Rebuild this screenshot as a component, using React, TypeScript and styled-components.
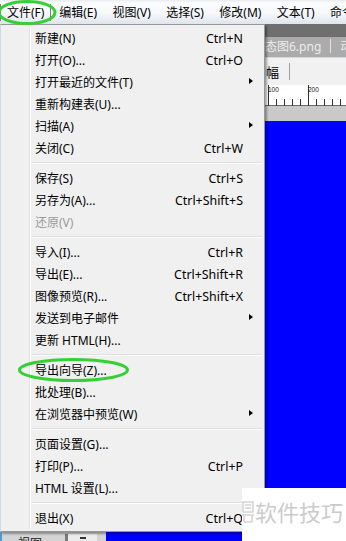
import React from "react";
import styled, { createGlobalStyle } from "styled-components";

const Global = createGlobalStyle`
  html, body { margin: 0; padding: 0; overflow: hidden; background: #fff; }
  body { width: 346px; height: 541px; }
  * { box-sizing: border-box; }
`;

const FONT = `"Noto Sans", "Noto Sans CJK SC", sans-serif`;

const Window = styled.div`
  position: relative;
  width: 346px;
  height: 560px;
  display: flex;
  flex-direction: column;
  font-family: ${FONT};
  font-size: 12px;
  color: #000;
  overflow: hidden;
`;

const MenuBar = styled.div`
  height: 24px;
  display: flex;
  align-items: stretch;
  background: linear-gradient(#e9ecf0 0px, #fbfcfd 3px, #f6f8fb 55%, #dfe5ee 100%);
  white-space: nowrap;
`;

const BarItem = styled.div<{ $active?: boolean }>`
  display: flex;
  align-items: center;
  padding: 0 ${(p) => (p.$active ? "6px" : "6.7px")} 1px;
  border-left: 1px solid ${(p) => (p.$active ? "#7d7d7d" : "transparent")};
  border-right: 1px solid ${(p) => (p.$active ? "#7d7d7d" : "transparent")};
  margin: 4px 0 3px;
  flex: none;
`;

const Workspace = styled.div`
  flex: 1;
  display: flex;
  flex-direction: column;
  border-left: 2px solid #4f9bd3;
`;

const DarkStrip = styled.div`
  height: 13px;
  background: #6f6f6f;
`;

const TabStrip = styled.div`
  height: 21px;
  background: #ababab;
  display: flex;
  align-items: center;
  gap: 9px;
  padding-left: 251px;
  padding-bottom: 2px;
  color: #ededed;
  font-size: 12px;
  white-space: nowrap;
  overflow: hidden;
  border-bottom: 1px solid #d8d8d8;
`;

const TabDivider = styled.span`
  width: 1px;
  height: 14px;
  background: #e2e2e2;
  flex: none;
`;

const Toolbar = styled.div`
  height: 27px;
  background: #f1f1f1;
  display: flex;
  align-items: center;
  gap: 10px;
  padding-left: 251px;
  white-space: nowrap;
  overflow: hidden;
  font-size: 13px;
`;

const ToolSep = styled.span`
  width: 1px;
  height: 17px;
  background: #a0a0a0;
  flex: none;
`;

const RulerBox = styled.div`
  height: 21px;
  background: #fff;
  border-bottom: 1px solid #6a6a6a;
`;

const GreyBar = styled.div`
  height: 15px;
  background: #c9c9c9;
`;

const MainRow = styled.div`
  flex: 1;
  display: flex;
`;

const SidePanel = styled.div`
  width: 104px;
  display: flex;
  flex-direction: column;
  justify-content: flex-end;
  background: #d6d6d6;
`;

const Dock = styled.div`
  height: 28px;
  display: flex;
  align-items: flex-start;
  padding-top: 2px;
  background: #d4d4d4;
`;

const DockLabel = styled.span`
  margin-left: 16px;
  width: 47px;
  color: #222;
`;

const DockEdge = styled.span`
  width: 3px;
  height: 20px;
  background: #7a7a7a;
`;

const DockBox = styled.span`
  width: 29px;
  height: 20px;
  background: #ececec;
  display: flex;
  justify-content: center;
  padding-top: 3px;
  &::before {
    content: "";
    width: 6px;
    height: 2px;
    background: #333;
  }
`;

const Canvas = styled.div`
  flex: 1;
  background: #0000fe;
`;

const DropMenu = styled.div`
  position: absolute;
  top: 24px;
  left: 0;
  width: 265px;
  padding: 2px 0;
  background: #f0f0f0;
  border: 1px solid #979797;
  border-left-color: #c9dcec;
  box-shadow: 2px 2px 2px rgba(0, 0, 0, 0.35);
  &::before {
    content: "";
    position: absolute;
    top: 2px;
    bottom: 2px;
    left: 28px;
    width: 1px;
    background: #e2e3e3;
    border-right: 1px solid #fff;
    box-sizing: content-box;
  }
`;

const Row = styled.div<{ $disabled?: boolean }>`
  position: relative;
  height: 22px;
  display: flex;
  align-items: center;
  padding-left: 34px;
  padding-right: 21px;
  color: ${(p) => (p.$disabled ? "#9b9b9b" : "#000")};
  white-space: nowrap;
`;

const Label = styled.span`
  flex: 1;
`;

const Shortcut = styled.span`
  text-align: right;
  font-size: 12.4px;
`;

const Arrow = styled.span`
  position: absolute;
  right: 11px;
  top: 7px;
  width: 0;
  height: 0;
  border-top: 3.5px solid transparent;
  border-bottom: 3.5px solid transparent;
  border-left: 4px solid #000;
`;

const Sep = styled.div`
  height: 2px;
  margin: 3px 2px 3px 31px;
  border-top: 1px solid #e0e0e0;
  border-bottom: 1px solid #fff;
`;

const Marks = styled.svg`
  position: absolute;
  top: 0;
  left: 0;
  pointer-events: none;
`;

const Watermark = styled.div`
  position: absolute;
  top: 488px;
  left: 242px;
  width: 104px;
  height: 60px;
  background: #fff;
  display: flex;
  align-items: flex-start;
  padding-top: 9px;
  gap: 1px;
`;

const WmText = styled.span`
  font-family: "Noto Sans CJK SC", sans-serif;
  font-size: 22px;
  line-height: 28px;
  color: #cbcbcb;
  white-space: nowrap;
`;

type Item =
  | { sep: true }
  | { label: string; shortcut?: string; sub?: boolean; disabled?: boolean; sep?: false };

const items: Item[] = [
  { label: "新建(N)", shortcut: "Ctrl+N" },
  { label: "打开(O)...", shortcut: "Ctrl+O" },
  { label: "打开最近的文件(T)", sub: true },
  { label: "重新构建表(U)..." },
  { label: "扫描(A)", sub: true },
  { label: "关闭(C)", shortcut: "Ctrl+W" },
  { sep: true },
  { label: "保存(S)", shortcut: "Ctrl+S" },
  { label: "另存为(A)...", shortcut: "Ctrl+Shift+S" },
  { label: "还原(V)", disabled: true },
  { sep: true },
  { label: "导入(I)...", shortcut: "Ctrl+R" },
  { label: "导出(E)...", shortcut: "Ctrl+Shift+R" },
  { label: "图像预览(R)...", shortcut: "Ctrl+Shift+X" },
  { label: "发送到电子邮件", sub: true },
  { label: "更新 HTML(H)..." },
  { sep: true },
  { label: "导出向导(Z)..." },
  { label: "批处理(B)..." },
  { label: "在浏览器中预览(W)", sub: true },
  { sep: true },
  { label: "页面设置(G)..." },
  { label: "打印(P)...", shortcut: "Ctrl+P" },
  { label: "HTML 设置(L)..." },
  { sep: true },
  { label: "退出(X)", shortcut: "Ctrl+Q" },
];

const barItems = ["文件(F)", "编辑(E)", "视图(V)", "选择(S)", "修改(M)", "文本(T)", "命令(C)"];

function Ruler() {
  const ticks: React.ReactNode[] = [];
  for (let x = 146; x < 346; x += 8) {
    const major = (x - 146) % 40 === 0;
    ticks.push(
      <line key={x} x1={x + 0.5} x2={x + 0.5} y1={major ? 0 : 14} y2={21} stroke="#333" strokeWidth={1} />
    );
  }
  const labels: React.ReactNode[] = [];
  for (let v = -100; v <= 300; v += 100) {
    const x = 304 + ((v - 200) / 100) * 40 + 2;
    labels.push(
      <text key={v} x={x} y={7} fontSize={6.5} fill="#222" fontFamily="Liberation Sans, sans-serif">
        {Math.abs(v)}
      </text>
    );
  }
  return (
    <svg width="344" height="21" style={{ display: "block" }}>
      {ticks}
      {labels}
    </svg>
  );
}

export default function App() {
  return (
    <>
      <Global />
      <Window>
        <MenuBar>
          {barItems.map((b, i) => (
            <BarItem key={b} $active={i === 0}>
              {b}
            </BarItem>
          ))}
        </MenuBar>
        <Workspace>
          <DarkStrip />
          <TabStrip>
            <span>动态图6.png</span>
            <TabDivider />
            <span>动态图7.png</span>
          </TabStrip>
          <Toolbar>
            <span>画幅</span>
            <ToolSep />
          </Toolbar>
          <RulerBox>
            <Ruler />
          </RulerBox>
          <GreyBar />
          <MainRow>
            <SidePanel>
              <Dock>
                <DockLabel>视图</DockLabel>
                <DockEdge />
                <DockBox />
              </Dock>
            </SidePanel>
            <Canvas />
          </MainRow>
        </Workspace>

        <DropMenu>
          {items.map((it, i) =>
            it.sep ? (
              <Sep key={i} />
            ) : (
              <Row key={i} $disabled={it.disabled}>
                <Label>{it.label}</Label>
                {it.shortcut && <Shortcut>{it.shortcut}</Shortcut>}
                {it.sub && <Arrow />}
              </Row>
            )
          )}
        </DropMenu>

        <Watermark>
          <svg width="12" height="28" viewBox="0 0 12 28">
            <path d="M1 5 H11 V15 H1 Z M3 8 H9 M3 11 H9 M0 18 H12 M2 18 V25 M10 18 V25 M2 25 H10" stroke="#d4d4d4" strokeWidth="1.6" fill="none" />
          </svg>
          <WmText>软件技巧</WmText>
        </Watermark>

        <Marks width="346" height="541">
          <ellipse cx="27" cy="12.5" rx="28" ry="11" fill="none" stroke="#35d035" strokeWidth="3" />
          <ellipse cx="73.5" cy="370" rx="54" ry="10.5" fill="none" stroke="#35d035" strokeWidth="3" />
        </Marks>
      </Window>
    </>
  );
}
